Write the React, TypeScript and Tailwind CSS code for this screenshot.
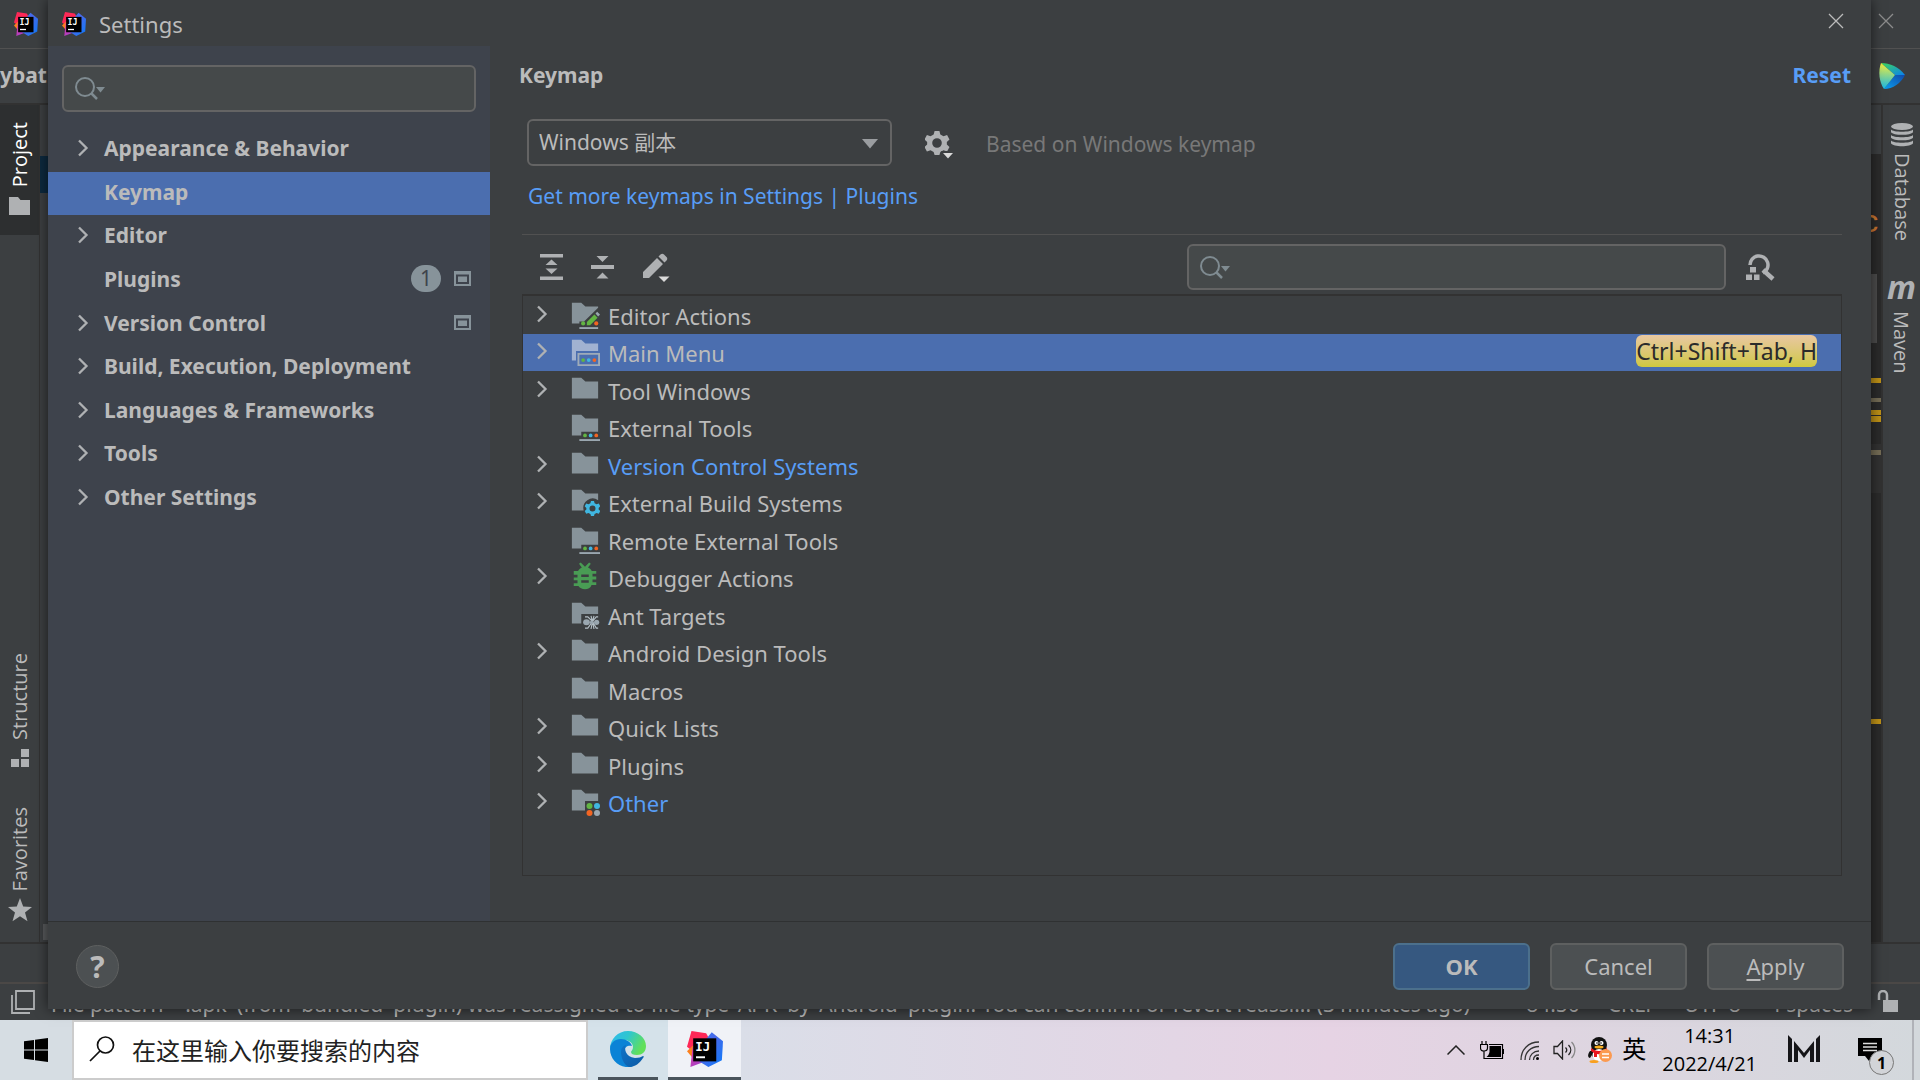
import React from 'react';

const DOT = { green: '#62b543', blue: '#40b6e0', orange: '#f26522', grey: '#9aa7b0' };
const GEAR =
  'M-1-5h2l.4 1.5 1.3.7 1.5-.5 1 1.8-1.1 1.1v1l1.1 1.1-1 1.8-1.5-.5-1.3.7L1 5h-2l-.4-1.3-1.3-.7-1.5.5-1-1.8 1.1-1.1v-1l-1.1-1.1 1-1.8 1.5.5 1.3-.7zM0-2a2 2 0 1 0 0 4 2 2 0 0 0 0-4z';

function IdeaLogo({ id, className }: { id: string; className: string }) {
  return (
    <svg viewBox="0 0 32 32" className={className} aria-hidden="true">
      <defs>
        <linearGradient id={`${id}b`} x1="0" y1="0" x2="1" y2="1">
          <stop offset="0" stopColor="#2f7df5" />
          <stop offset=".4" stopColor="#4a68e8" />
          <stop offset="1" stopColor="#0a7cfc" />
        </linearGradient>
        <linearGradient id={`${id}p`} x1="0" y1="0" x2="1" y2="1">
          <stop offset="0" stopColor="#e2389f" />
          <stop offset="1" stopColor="#8b46d8" />
        </linearGradient>
      </defs>
      <path d="M4 0l13 2 4 7-17 8-4-3z" fill="#fe2857" />
      <path d="M0 18l5-5 6 6-5 6z" fill="#fc801d" />
      <path d="M5 14l14 12-16 6z" fill={`url(#${id}p)`} />
      <path d="M22 1l10 8-1 17-12 6-8-5 6-20z" fill={`url(#${id}b)`} />
      <rect x="5.500" y="6.500" width="20.500" height="20.500" fill="#000" />
      <g fill="#fff">
        <rect x="8" y="22.500" width="8" height="1.700" />
        <text x="7.300" y="17.500" fontFamily="DejaVu Sans Mono, monospace" fontWeight="700" fontSize="11">IJ</text>
      </g>
    </svg>
  );
}

function Chevron() {
  return (
    <svg viewBox="0 0 12 18" className="h-[18px] w-3" aria-hidden="true">
      <path d="M2 1.500l7.500 7.500L2 16.500" fill="none" stroke="#afb1b3" strokeWidth="2.300" />
    </svg>
  );
}

function SearchIcon() {
  return (
    <svg viewBox="0 0 32 24" className="h-6 w-8" aria-hidden="true">
      <circle cx="10" cy="10" r="9" fill="none" stroke="#7f8b91" strokeWidth="2" />
      <path d="M16 16l6 6" stroke="#7f8b91" strokeWidth="2.500" />
      <path d="M21 10h9l-4.500 5.500z" fill="#7f8b91" />
    </svg>
  );
}

function SharedIcon() {
  return (
    <svg viewBox="0 0 17 15" className="h-[15px] w-[17px]" aria-hidden="true">
      <rect width="17" height="15" fill="#87939a" />
      <rect x="2" y="3.500" width="13" height="9.500" fill="#3e434c" />
      <rect x="4" y="5.500" width="9" height="5.500" fill="#87939a" />
    </svg>
  );
}

type IconKind = 'folder' | 'editor' | 'menu' | 'tools' | 'gear' | 'bug' | 'ant' | 'other';

function Dots({ x, y }: { x: number; y: number }) {
  return (
    <>
      <circle cx={x} cy={y} r="1" fill={DOT.green} />
      <circle cx={x + 3} cy={y} r="1" fill={DOT.blue} />
      <circle cx={x + 6} cy={y} r="1" fill={DOT.orange} />
    </>
  );
}

function TreeIcon({ kind }: { kind: IconKind }) {
  const fill = '#87939a';
  return (
    <svg viewBox="0 0 16 16" className="size-[30px] shrink-0" aria-hidden="true">
      {kind === 'folder' && <path d="M1 2h5l2.200 2H15v9H1z" fill={fill} />}
      {kind === 'editor' && (
        <>
          <path d="M1 2h5l2.200 2H15v.6L7.500 12H5v1H1z" fill={fill} />
          <path d="M9 12.300l4-4 1.700 1.700-4 4H9z" fill={DOT.green} />
          <path d="M13.600 7.700l.9-.9 1.500 1.500-1 1z" fill={DOT.grey} />
          <circle cx="7" cy="13" r="1.100" fill={DOT.green} />
          <circle cx="14" cy="13" r="1.100" fill={DOT.orange} />
          <rect x="5" y="15" width="10" height="1" fill={DOT.grey} />
        </>
      )}
      {kind === 'menu' && (
        <>
          <path d="M1 2h5l2.200 2H15v4H3.200v5H1z" fill="#a1b2d1" />
          <path d="M4 9h12v7H4zm1 1v5h10v-5z" fill="#9eabb9" fillRule="evenodd" />
          <Dots x={7} y={12.800} />
        </>
      )}
      {kind === 'tools' && (
        <>
          <path d="M1 2h5l2.200 2H15v7H6v2H1z" fill={fill} />
          <Dots x={8} y={13} />
          <rect x="5" y="15" width="11" height="1" fill={DOT.grey} />
        </>
      )}
      {kind === 'gear' && (
        <>
          <path d="M1 2h5l2.200 2H15v3.600A5 5 0 0 0 7.300 13H1z" fill={fill} />
          <path d={GEAR} transform="translate(12 12) scale(.8)" fill={DOT.blue} />
        </>
      )}
      {kind === 'bug' && (
        <path
          fillRule="evenodd"
          fill="#499c54"
          d="M4.800 1.500l.9-.7L8 3l2.200-2.200.9.700-1.500 1.900c1 .4 1.700 1 2 1.900H14v1.500h-2v1.500h2v1.500h-2v1.500h2v1.500h-2.500C11 14.400 9.500 15 8 15s-3-.6-3.500-1.700H2v-1.500h2v-1.500H2V8.800h2V7.300H2V5.300h2.300c.4-.9 1.100-1.500 2-1.900zM6 7.200v1.300h4V7.200zm0 3.100v1.300h4v-1.300z"
        />
      )}
      {kind === 'ant' && (
        <>
          <path d="M1 2h5l2.200 2H15v4H6v5H1z" fill={fill} />
          <g stroke="#b4bfc6" strokeWidth=".6" fill="none">
            <path d="M12 12L9.500 9.500H8M12 12L9.500 15.500H8M12 12l-.8-3M12 12l-.8 4M12 12l.8-3M12 12l.8 4M12 12l2-2.500h1M12 12l2 3.500h1" />
          </g>
          <g fill={DOT.grey}>
            <ellipse cx="8.800" cy="12.400" rx="1.800" ry="1.600" />
            <circle cx="11.600" cy="12.400" r="1" />
            <circle cx="14.200" cy="12.400" r="1.400" />
          </g>
        </>
      )}
      {kind === 'other' && (
        <>
          <path d="M1 2h5l2.200 2H15v4H8v5H1z" fill={fill} />
          <circle cx="10.400" cy="10.600" r="1.600" fill={DOT.green} />
          <circle cx="14.400" cy="10.600" r="1.600" fill={DOT.blue} />
          <circle cx="10.400" cy="14.400" r="1.600" fill={DOT.orange} />
          <circle cx="14.400" cy="14.400" r="1.600" fill={DOT.grey} />
        </>
      )}
    </svg>
  );
}

const SECTIONS: { label: string; open?: boolean; badge?: string; shared?: boolean; active?: boolean }[] = [
  { label: 'Appearance & Behavior', open: true },
  { label: 'Keymap', active: true },
  { label: 'Editor', open: true },
  { label: 'Plugins', badge: '1', shared: true },
  { label: 'Version Control', open: true, shared: true },
  { label: 'Build, Execution, Deployment', open: true },
  { label: 'Languages & Frameworks', open: true },
  { label: 'Tools', open: true },
  { label: 'Other Settings', open: true },
];

const ACTIONS: { label: string; kind: IconKind; open?: boolean; link?: boolean; active?: boolean; keys?: string }[] = [
  { label: 'Editor Actions', kind: 'editor', open: true },
  { label: 'Main Menu', kind: 'menu', open: true, active: true, keys: 'Ctrl+Shift+Tab, H' },
  { label: 'Tool Windows', kind: 'folder', open: true },
  { label: 'External Tools', kind: 'tools' },
  { label: 'Version Control Systems', kind: 'folder', open: true, link: true },
  { label: 'External Build Systems', kind: 'gear', open: true },
  { label: 'Remote External Tools', kind: 'tools' },
  { label: 'Debugger Actions', kind: 'bug', open: true },
  { label: 'Ant Targets', kind: 'ant' },
  { label: 'Android Design Tools', kind: 'folder', open: true },
  { label: 'Macros', kind: 'folder' },
  { label: 'Quick Lists', kind: 'folder', open: true },
  { label: 'Plugins', kind: 'folder', open: true },
  { label: 'Other', kind: 'other', open: true, link: true },
];

function CloseIcon() {
  return (
    <svg viewBox="0 0 16 16" className="size-4" aria-hidden="true">
      <path d="M1 1l14 14M15 1L1 15" stroke="currentColor" strokeWidth="1.300" />
    </svg>
  );
}

function IdeWindow() {
  return (
    <div className="flex h-full flex-col overflow-hidden">
      <div className="flex h-[49px] items-center justify-between border-b border-[#515151] pr-[26px] pl-3.5">
        <IdeaLogo id="w" className="size-6" />
        <button aria-label="Close window" className="mb-1.5 text-[#8c8c8c]"><CloseIcon /></button>
      </div>
      <div className="flex h-14 items-center justify-between border-b-2 border-[#323232] pr-3.5">
        <span className="font-bold">ybat</span>
        <svg viewBox="0 0 28 28" className="size-7" aria-hidden="true">
          <defs>
            <linearGradient id="cwl" x1="0" y1="0" x2="0" y2="1"><stop offset="0" stopColor="#f6f13a" /><stop offset="1" stopColor="#15b8e8" /></linearGradient>
            <linearGradient id="cwt" x1="0" y1="0" x2="1" y2="1"><stop offset="0" stopColor="#3ddb58" /><stop offset="1" stopColor="#0a7ff0" /></linearGradient>
            <linearGradient id="cwb" x1="0" y1="1" x2="1" y2="0"><stop offset="0" stopColor="#0aa0f0" /><stop offset="1" stopColor="#1148a8" /></linearGradient>
          </defs>
          <path d="M3 1c9 0 18 4 24 12H17z" fill="url(#cwt)" />
          <path d="M27 13c-4 8-12 14-21 14l11-14z" fill="url(#cwb)" />
          <path d="M3 1l14 12L6 27C1 20 0 9 3 1z" fill="url(#cwl)" />
        </svg>
      </div>
      <div className="flex min-h-0 flex-1">
        <div className="flex w-10 flex-col items-center border-r border-[#323232] font-['Open_Sans',sans-serif] text-xl">
          <button className="flex h-[130px] w-full flex-col items-center justify-end gap-2.5 bg-[#2d2f30] pb-5 text-white">
            <span className="rotate-180 leading-6 [writing-mode:vertical-rl]">Project</span>
            <svg viewBox="0 0 21 18" className="h-[18px] w-[21px]" aria-hidden="true"><path d="M0 0h9l2.500 3H21v15H0z" fill="#afb1b3" /></svg>
          </button>
          <div className="flex-1" />
          <button className="flex flex-col items-center gap-2.5">
            <span className="rotate-180 leading-6 [writing-mode:vertical-rl]">Structure</span>
            <svg viewBox="0 0 18 18" className="size-[18px]" aria-hidden="true"><path d="M10 0h8v8h-8zM0 10h8v8H0zM10 10h8v8h-8z" fill="#afb1b3" /></svg>
          </button>
          <button className="mt-10 mb-5 flex flex-col items-center gap-1.5">
            <span className="rotate-180 leading-6 [writing-mode:vertical-rl]">Favorites</span>
            <svg viewBox="0 0 24 24" className="size-6" aria-hidden="true"><path d="M12 0l3.200 8.600 8.800.3-7 5.500 2.500 8.900L12 18.200 4.500 23.300 7 14.400 0 8.900l8.800-.3z" fill="#afb1b3" /></svg>
          </button>
        </div>
        <div className="flex w-2 flex-col justify-between">
          <div className="mt-[51px] h-[37px] bg-[#0d293e]" />
          <div className="mb-0.5 ml-[3px] h-4 bg-[#585a5c]" />
        </div>
        <div className="flex-1 bg-[#2b2b2b]" />
        <div className="flex w-3 flex-col bg-[#2b2b2b]">
          <div className="h-[49px] bg-[#3c3f41]" />
          <div className="mt-14 h-7 font-['Liberation_Mono',monospace] text-[31px] leading-7 text-[#cc7832]"><span className="-ml-2">c</span></div>
          <div className="mt-9 mr-1 h-[69px] bg-[#4d4d4d]" />
          <div className="mt-[35px] h-[5px] bg-[#be9117]" />
          <div className="mt-[15px] h-1 bg-[#756d56]" />
          <div className="mt-2 h-[5px] bg-[#be9117]" />
          <div className="mt-px h-1.5 bg-[#be9117]" />
          <div className="mt-[22px] h-[49px] bg-[#323232] pt-1.5">
            <div className="h-[5px] bg-[#756d56]" />
          </div>
          <div className="mt-[226px] h-[5px] bg-[#be9117]" />
        </div>
        <div className="flex w-[39px] flex-col items-center border-l-2 border-[#323232] pt-[18px] font-['Open_Sans',sans-serif] text-xl">
          <button className="flex flex-col items-center gap-1.5">
            <svg viewBox="0 0 22 24" className="h-6 w-[22px]" fill="#afb1b3" aria-hidden="true">
              <ellipse cx="11" cy="3.500" rx="11" ry="3.500" />
              <path d="M0 6.500c2 3 20 3 22 0v2.800c-2 3.400-20 3.400-22 0zM0 12c2 3 20 3 22 0v2.800c-2 3.400-20 3.400-22 0zM0 17.500c2 3 20 3 22 0v2.800c-2 3.900-20 3.900-22 0z" />
            </svg>
            <span className="leading-6 [writing-mode:vertical-rl]">Database</span>
          </button>
          <button className="mt-[34px] flex flex-col items-center gap-2">
            <span className="h-7 text-[32px] leading-6 font-bold text-[#afb1b3] italic">m</span>
            <span className="leading-6 [writing-mode:vertical-rl]">Maven</span>
          </button>
        </div>
      </div>
      <div className="h-10 border-t-2 border-[#323232]" />
      <div className="flex h-[38px] items-start border-t-2 border-[#4b4846] pt-1.5 pr-[22px] pl-[11px]">
        <svg viewBox="0 0 24 24" className="size-6 shrink-0" fill="none" stroke="#afb1b3" strokeWidth="1.800" aria-hidden="true">
          <path d="M5 1h18v18H5zM1 5v18h18" />
        </svg>
        <p className="ml-4 flex-1 leading-7 whitespace-nowrap">
          File pattern '*.apk' (from 'bundled' plugin) was reassigned to file type 'APK' by 'Android' plugin: You can confirm or revert reassi... (3 minutes ago)
        </p>
        <div className="mr-6 flex gap-7 leading-7 whitespace-nowrap">
          <span>84:50</span><span>CRLF</span><span>UTF-8</span><span>4 spaces</span>
        </div>
        <svg viewBox="0 0 21 22" className="h-[22px] w-[21px] shrink-0" aria-hidden="true">
          <path d="M2 10V5a4 4 0 0 1 8 0v5" fill="none" stroke="#afb1b3" strokeWidth="2.500" />
          <rect x="6" y="10" width="15" height="12" fill="#afb1b3" />
        </svg>
      </div>
    </div>
  );
}

function Sidebar() {
  return (
    <nav aria-label="Settings sections" className="w-[442px] shrink-0 bg-[#3e434c] pt-[19px] font-bold">
      <div className="relative mx-3.5">
        <span className="pointer-events-none absolute top-3 left-[13px]"><SearchIcon /></span>
        <input aria-label="Search settings" className="block h-[47px] w-full rounded-md border-2 border-[#646464] bg-[#45494a] pl-12 outline-none" />
      </div>
      <ul className="mt-4 flex h-[392px] flex-col">
        {SECTIONS.map((s) => (
          <li key={s.label} className={s.active ? 'flex-1 bg-[#4b6eaf]' : 'flex-1'}>
            <button className="flex h-full w-full items-center pr-[19px] pb-[3px] pl-[29px] text-left">
              <span className="w-[27px]">{s.open && <Chevron />}</span>
              <span className="flex-1 leading-7">{s.label}</span>
              {s.badge && (
                <span className="mr-[13px] flex h-[27px] w-[30px] items-center justify-center rounded-full bg-[#87939a] font-normal text-[#3e434c]">{s.badge}</span>
              )}
              {s.shared && <SharedIcon />}
            </button>
          </li>
        ))}
      </ul>
    </nav>
  );
}

function KeymapPanel() {
  return (
    <main className="flex min-w-0 flex-1 flex-col pb-[45px]">
      <div className="flex h-[58px] items-center justify-between pt-0.5 pr-5 pl-[29px]">
        <h1 className="font-bold">Keymap</h1>
        <button className="font-bold text-[#589df6]">Reset</button>
      </div>
      <div className="mr-[29px] ml-8 flex min-h-0 flex-1 flex-col">
        <div className="mt-[15px] flex items-center pl-[5px]">
          <div className="relative">
            <select aria-label="Keymap" className="block h-[47px] w-[365px] appearance-none rounded-md border-2 border-[#646464] bg-[#3c3f41] pl-2.5 outline-none">
              <option>Windows 副本</option>
            </select>
            <svg viewBox="0 0 16 10" className="pointer-events-none absolute top-5 right-3.5 h-2.5 w-4" aria-hidden="true"><path d="M0 0h16l-8 9.500z" fill="#9a9da0" /></svg>
          </div>
          <button aria-label="Keymap actions" className="ml-[33px] pt-0.5">
            <svg viewBox="0 0 30 30" className="size-[30px]" aria-hidden="true">
              <path d={GEAR} transform="translate(12 14) scale(2.400)" fill="#afb1b3" />
              <path d="M18 23h11l-5.500 6z" fill="#3c3f41" stroke="#3c3f41" strokeWidth="2" />
              <path d="M18 24h10l-5 5.500z" fill="#dadada" />
            </svg>
          </button>
          <p className="ml-[31px] pt-1 text-[#787878]">Based on Windows keymap</p>
        </div>
        <a href="#plugins" className="mt-4 mb-6 self-start pl-1.5 leading-7 text-[#589df6]">Get more keymaps in Settings | Plugins</a>
        <div className="flex items-center border-t border-[#515151] pt-[9px] pr-[67px] pb-1 pl-[17px]">
          <button aria-label="Expand all">
            <svg viewBox="0 0 26 28" className="h-7 w-[26px]" fill="#afb1b3" aria-hidden="true"><path d="M1 1h23v3.500H1zM1 23.500h23V27H1zM6.500 12l6-5.500 6 5.500zM6.500 15.500h12l-6 5.500z" /></svg>
          </button>
          <button aria-label="Collapse all" className="ml-[25px]">
            <svg viewBox="0 0 26 28" className="h-7 w-[26px]" fill="#afb1b3" aria-hidden="true"><path d="M1 12h23v4H1zM6.500 3h12l-6 6zM6.500 25.500h12l-6-6z" /></svg>
          </button>
          <button aria-label="Edit shortcut" className="ml-6">
            <svg viewBox="0 0 30 30" className="size-[30px]" aria-hidden="true">
              <path d="M3 20L17 6l6 6L9 26H3zM18.500 4.500l2-2c1-1 2.500-1 3.500 0l2.500 2.500c1 1 1 2.500 0 3.500l-2 2z" fill="#afb1b3" />
              <path d="M18 25h11l-5.500 6z" stroke="#3c3f41" strokeWidth="2.500" />
              <path d="M18.500 24.500h11L24 30z" fill="#dadada" />
            </svg>
          </button>
          <div className="relative ml-auto w-[539px]">
            <span className="pointer-events-none absolute top-3 left-[13px]"><SearchIcon /></span>
            <input aria-label="Search actions" className="block h-[46px] w-full rounded-md border-2 border-[#646464] bg-[#45494a] pl-12 outline-none" />
          </div>
          <button aria-label="Find actions by shortcut" className="ml-5">
            <svg viewBox="0 0 29 28" className="h-7 w-[29px]" aria-hidden="true">
              <path d="M4 12a9 9 0 1 1 13 8" fill="none" stroke="#afb1b3" strokeWidth="3.500" />
              <path d="M17 17l10 9" stroke="#afb1b3" strokeWidth="4.500" />
              <path d="M4 14h6v5.500H4zM0 21.500h6V27H0zM8 21.500h5.500V27H8z" fill="#afb1b3" />
            </svg>
          </button>
        </div>
        <div className="flex-1 overflow-hidden border border-t-2 border-[#323232]">
          <ul className="flex h-[525px] flex-col">
            {ACTIONS.map((a) => (
              <li key={a.label} className={a.active ? 'min-h-0 flex-1 bg-[#4b6eaf]' : 'min-h-0 flex-1'}>
                <button className="flex h-full w-full items-center pr-6 pb-0.5 pl-[13px] text-left text-[22px]">
                  <span className="w-[34px]">{a.open && <Chevron />}</span>
                  <TreeIcon kind={a.kind} />
                  <span className={a.link ? 'ml-2 flex-1 pt-1 leading-7 text-[#589df6]' : 'ml-2 flex-1 pt-1 leading-7'}>{a.label}</span>
                  {a.keys && (
                    <kbd className="rounded-md bg-linear-to-b from-[#e9c7a0] to-[#d0c83c] font-[inherit] text-[23px] leading-8 text-[#2b2b2b]">{a.keys}</kbd>
                  )}
                </button>
              </li>
            ))}
          </ul>
        </div>
      </div>
    </main>
  );
}

function SettingsDialog() {
  return (
    <div role="dialog" aria-label="Settings" className="absolute top-0 right-[49px] bottom-[11px] left-12 flex flex-col bg-[#3c3f41] shadow-[0_0_12px_rgba(0,0,0,0.6)]">
      <header className="flex h-[46px] shrink-0 items-center pt-0.5 pr-[27px] pl-3.5">
        <IdeaLogo id="d" className="size-6" />
        <span className="ml-[13px] flex-1 text-[22px]">Settings</span>
        <button aria-label="Close" className="mb-1.5"><CloseIcon /></button>
      </header>
      <div className="flex min-h-0 flex-1">
        <Sidebar />
        <KeymapPanel />
      </div>
      <footer className="flex h-[88px] shrink-0 items-center gap-5 border-t border-[#2f3132] pt-0.5 pr-[27px] pl-7">
        <button aria-label="Help" className="mr-auto flex size-[43px] items-center justify-center rounded-full border border-[#5e6060] bg-[#4c5052] text-[30px] font-bold">?</button>
        <button className="h-[47px] w-[137px] rounded-md border-2 border-[#4c708c] bg-[#365880] text-[22px] font-bold">OK</button>
        <button className="h-[47px] w-[137px] rounded-md border-2 border-[#5e6060] bg-[#4c5052] text-[22px]">Cancel</button>
        <button className="h-[47px] w-[137px] rounded-md border-2 border-[#5e6060] bg-[#4c5052] text-[22px]"><span className="underline underline-offset-4">A</span>pply</button>
      </footer>
    </div>
  );
}

function Taskbar() {
  return (
    <div className="flex h-15 shrink-0 items-stretch bg-linear-to-r from-[#d5dce6] via-[#dcdcea] to-[#d3d8dc] font-['Open_Sans','Noto_Sans_CJK_SC',sans-serif] text-black">
      <button aria-label="Start" className="flex w-[72px] items-center justify-center bg-[#d6dde3]">
        <svg viewBox="0 0 24 24" className="size-6" aria-hidden="true"><path d="M0 3.300l10-1.300v9.500H0zM11 1.800L24 0v11.500H11zM0 12.500h10V22L0 20.700zM11 12.500h13V24l-13-1.800z" /></svg>
      </button>
      <div className="relative w-[516px]">
        <svg viewBox="0 0 26 26" className="pointer-events-none absolute top-4 left-[17px] size-[26px]" fill="none" stroke="#111" strokeWidth="1.700" aria-hidden="true"><circle cx="16.500" cy="9" r="8" /><path d="M11 15L1 25" /></svg>
        <input aria-label="Taskbar search" placeholder="在这里输入你要搜索的内容" className="h-full w-full border-2 border-[#ccc] bg-white pl-[58px] text-2xl outline-none placeholder:text-[#222]" />
      </div>
      <button aria-label="Edge" className="flex w-20 flex-col items-center bg-[#d5e2ea]">
        <span className="flex flex-1 items-center">
          <svg viewBox="0 0 36 36" className="size-9" aria-hidden="true">
            <defs>
              <linearGradient id="eg" x1="0" y1="0" x2="1" y2=".4"><stop offset="0" stopColor="#2fb8f0" /><stop offset=".5" stopColor="#2fc6cf" /><stop offset="1" stopColor="#62e05a" /></linearGradient>
              <linearGradient id="ed" x1="0" y1="0" x2="1" y2="1"><stop offset="0" stopColor="#0f74c8" /><stop offset="1" stopColor="#0c59a4" /></linearGradient>
            </defs>
            <path d="M0 18C0 8 8 0 18 0s18 7 18 15c0 6-4 9-9 9-4 0-6-1-6-3 0-1 2-2 2-5 0-4-4-7-9-7C7 9 2 12 0 18z" fill="url(#eg)" />
            <path d="M0 18c0-6 5-10 11-10 5 0 10 3 11 7-3-1-8 0-8 7 0 6 4 12 9 14-12 2-23-6-23-18z" fill="#0b83d6" />
            <path d="M11 21c0-4 2-6 5-7-2 3-1 12 9 13 4 0 6-1 8-2 1 0 1 1 0 2-3 5-8 9-14 9-5-2-8-9-8-15z" fill="url(#ed)" />
          </svg>
        </span>
        <span className="h-[3px] w-15 bg-[#4a545c]" />
      </button>
      <button aria-label="IntelliJ IDEA" className="flex w-[73px] flex-col items-center bg-[#f0f2f7]">
        <span className="flex flex-1 items-center"><IdeaLogo id="t" className="size-9" /></span>
        <span className="h-[3px] w-full bg-[#4a545c]" />
      </button>
      <div className="flex flex-1 items-center justify-end bg-linear-to-r from-[#dadee8] via-[#e6d3e4] to-[#d3d8dc]">
        <svg viewBox="0 0 18 10" className="h-2.5 w-[18px]" fill="none" stroke="#222" strokeWidth="1.500" aria-hidden="true"><path d="M.5 9.500L9 1l8.500 8.500" /></svg>
        <svg viewBox="0 0 24 18" className="ml-[15px] h-[18px] w-6" aria-hidden="true">
          <path d="M9.500 5h11.500v11H6.500c1.500-1 2.500-3 3-5z" fill="#000" /><path d="M9 3.500h13.500v14H5.500M23.500 8v5M2 0v3M6 0v3M.5 3.500h7V7c0 2-1 3-3.500 3S.5 9 .5 7zM4 10v7.500h3" fill="none" stroke="#000" strokeWidth="1.200" />
        </svg>
        <svg viewBox="0 0 19 19" className="ml-4 size-[19px]" fill="none" stroke="#333" strokeWidth="1.300" aria-hidden="true"><path d="M1 19C1 9 8 1 19 1M5 19C5 11 11 5.500 19 5.500M9.500 19c0-5 4-9 9.500-9M13.500 19c0-3 2-5 5.500-5" /><circle cx="17.500" cy="17.500" r="1.500" fill="#000" stroke="none" /></svg>
        <svg viewBox="0 0 23 20" className="ml-3.5 h-5 w-[23px]" fill="none" stroke="#222" strokeWidth="1.300" aria-hidden="true"><path d="M1 6.500h3.500L9.500 1v18l-5-5.500H1zM12.500 7.500c1.500 1.500 1.500 3.500 0 5M15.500 5c3 3 3 7 0 10" /><path d="M18.500 2c4.500 4.500 4.500 11.500 0 16" stroke="#888" /></svg>
        <svg viewBox="0 0 24 26" className="ml-3 h-[26px] w-6" aria-hidden="true">
          <ellipse cx="11" cy="8" rx="8" ry="8" fill="#111" /><path d="M2 14c-3 4-2 7 0 7l2-3c1 5 13 5 15 0V12z" fill="#111" />
          <ellipse cx="11" cy="18" rx="6.500" ry="6" fill="#fff" /><circle cx="8.500" cy="6" r="2" fill="#fff" /><circle cx="13.500" cy="6" r="2" fill="#fff" /><circle cx="9" cy="6" r=".8" /><circle cx="13" cy="6" r=".8" />
          <ellipse cx="11" cy="10" rx="4.500" ry="1.500" fill="#f9b01e" /><path d="M3 11c5 4 11 4 16 0v4c-3 2-7 2.500-10 2v3H6v-4l-3-2z" fill="#e8141e" />
          <ellipse cx="6" cy="24.500" rx="4.500" ry="1.500" fill="#f9a01e" /><circle cx="17.500" cy="18.500" r="6.500" fill="#fb9a50" /><path d="M14 17h7M14 20.500h7" stroke="#fff" strokeWidth="1.400" />
        </svg>
        <span className="ml-2.5 pb-0.5 text-2xl leading-8">英</span>
        <div className="ml-4 text-center text-xl leading-7">
          <div>14:31</div>
          <div>2022/4/21</div>
        </div>
        <svg viewBox="0 0 32 27" className="mb-1 ml-[31px] h-[27px] w-8" fill="#151518" aria-hidden="true"><path d="M0 0l4 4v23H0zM32 0l-4 4v23h4zM6 6l10 12L26 6v21h-4V15l-6 8-6-8v12H6z" /></svg>
        <div className="relative mr-[30px] ml-[38px]">
          <svg viewBox="0 0 24 24" className="size-6" aria-hidden="true"><path d="M0 0h24v18h-9l-4 5-4-5H0z" /><path d="M5 5.500h14M5 9h14M5 12.500h14" stroke="#ddd" strokeWidth="1.300" /></svg>
          <span className="absolute top-3 left-[11px] flex size-[25px] items-center justify-center rounded-full border border-[#777] bg-[#d2d4d8] text-base font-bold">1</span>
        </div>
        <div className="h-full w-2 border-l-2 border-[#b0b2b8]" />
      </div>
    </div>
  );
}

export default function App() {
  return (
    <div className="flex h-screen flex-col bg-[#3c3f41] font-['Noto_Sans','Noto_Sans_CJK_SC',sans-serif] text-[21px] text-[#bbbbbb]">
      <div className="relative min-h-0 flex-1">
        <IdeWindow />
        <SettingsDialog />
      </div>
      <Taskbar />
    </div>
  );
}
